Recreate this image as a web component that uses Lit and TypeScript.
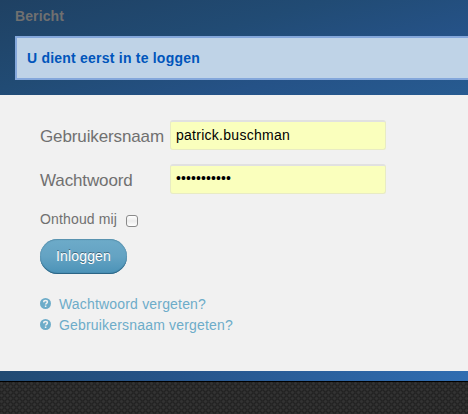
import { LitElement, html, css } from "lit";
import { customElement } from "lit/decorators.js";

@customElement("app-root")
export class AppRoot extends LitElement {
  static styles = css`
    :host {
      display: flex;
      flex-direction: column;
      width: 468px;
      height: 414px;
      overflow: hidden;
      font-family: "Liberation Sans", Arial, sans-serif;
      font-size: 14px;
      color: #707070;
      background: linear-gradient(90deg, #214a72, #265388 35%, #306db1);
    }
    * { box-sizing: border-box; }
    header {
      height: 95px;
      flex: none;
      padding: 8px 0 0 15px;
      background: linear-gradient(165deg, #1f4163, #214b74 40%, #255287 70%, #275b91);
    }
    h1 {
      margin: 0 0 12px;
      font-size: 14px;
      line-height: 16px;
      letter-spacing: 0.1px;
      color: #707070;
    }
    .notice {
      width: 500px;
      height: 44px;
      border: 2px solid #84a7db;
      background: #bfd3e7;
      color: #0055bb;
      font-weight: bold;
      line-height: 40px;
      padding-left: 10px;
      letter-spacing: 0.22px;
    }
    main {
      height: 276px;
      flex: none;
      padding: 25px 40px 0;
      background: #f1f1f1;
    }
    .row {
      display: flex;
      height: 30px;
      margin-bottom: 14px;
    }
    .row label {
      width: 130px;
      font-size: 17px;
      line-height: 34px;
      letter-spacing: -0.12px;
    }
    .row input {
      width: 216px;
      height: 30px;
      margin: 0;
      padding: 0 5px 2px;
      border: 1px solid #e8ebc4;
      border-top: 2px solid #e1e1e1;
      border-radius: 3px;
      background: #faffbd;
      color: #000;
      font: 14px "Liberation Sans", Arial, sans-serif;
      letter-spacing: 0.27px;
      outline: none;
    }
    .row input[type="password"] {
      padding-bottom: 3px;
      letter-spacing: 0.1px;
    }
    .remember {
      display: flex;
      align-items: center;
      height: 20px;
      margin-top: 15px;
      letter-spacing: 0.15px;
    }
    .remember input {
      appearance: none;
      width: 12px;
      height: 12px;
      margin: 4px 0 0 9px;
      border: 1px solid #8a8a8a;
      border-radius: 3px;
      background: linear-gradient(#fff, #ececec 50%, #fff);
    }
    button {
      display: block;
      width: 87px;
      height: 35px;
      margin: 10px 0 19px;
      padding: 0 0 1px;
      border: 0;
      border-radius: 18px;
      color: #fff;
      font: 14px "Liberation Sans", Arial, sans-serif;
      letter-spacing: 0.15px;
      text-shadow: 0 -1px 0 rgba(0, 0, 0, 0.4);
      background: linear-gradient(#6dabc9, #64a3c3 50%, #4a92b7);
      box-shadow: inset 0 1px 1px #5791ad, inset 0 -1px 1px #286180;
    }
    .links { margin: 0; padding: 0; list-style: none; }
    .links a {
      display: flex;
      align-items: center;
      height: 21px;
      color: #6dacc9;
      letter-spacing: 0.18px;
      text-decoration: none;
    }
    .links svg { margin: 0 8px 1px 0; }
    footer {
      height: 33px;
      flex: none;
      margin-top: 10px;
      border-top: 1px solid #000;
      background:
        linear-gradient(#1e1e1e, #1e1e1e) 0 0 / 6px 6px,
        #2c2c2c;
      background:
        conic-gradient(rgba(0, 0, 0, 0.22) 25%, transparent 0 50%, rgba(0, 0, 0, 0.22) 0 75%, transparent 0) 0 0 / 6px 6px,
        radial-gradient(circle at 1.5px 1.5px, #333 0.9px, #232323 2px) 0 0 / 3px 3px;
    }
  `;

  private link(text: string) {
    return html`<li><a href="#"><svg width="11" height="11" viewBox="0 0 11 11">
      <circle cx="5.5" cy="5.5" r="5.5" fill="#6dacc9"/>
      <path d="M3.7 4.2C3.7 1.9 7.4 2 7.4 4.1C7.4 5.3 5.6 5.3 5.6 6.6M5.6 7.6V9" fill="none" stroke="#f1f1f1" stroke-width="1.5"/>
    </svg><span>${text}</span></a></li>`;
  }

  render() {
    return html`
      <header>
        <h1>Bericht</h1>
        <div class="notice">U dient eerst in te loggen</div>
      </header>
      <main>
        <div class="row">
          <label for="user">Gebruikersnaam</label>
          <input id="user" value="patrick.buschman">
        </div>
        <div class="row">
          <label for="pass">Wachtwoord</label>
          <input id="pass" type="password" value="abcdefghijk">
        </div>
        <div class="remember"><label for="keep">Onthoud mij</label><input id="keep" type="checkbox"></div>
        <button>Inloggen</button>
        <ul class="links">
          ${this.link("Wachtwoord vergeten?")}
          ${this.link("Gebruikersnaam vergeten?")}
        </ul>
      </main>
      <footer></footer>
    `;
  }
}
